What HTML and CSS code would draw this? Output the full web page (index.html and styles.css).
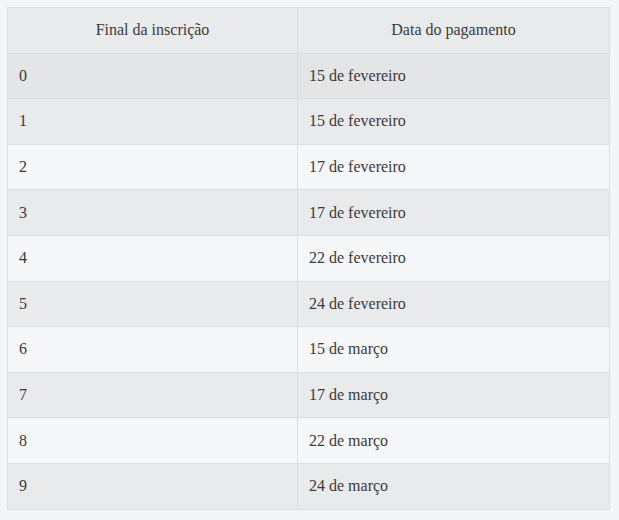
FILE: index.html
```html
<!DOCTYPE html>
<html lang="pt">
<head>
<meta charset="utf-8">
<link rel="stylesheet" href="styles.css">
</head>
<body>
<table class="pay-table">
  <thead>
    <tr><th>Final da inscrição</th><th>Data do pagamento</th></tr>
  </thead>
  <tbody>
    <tr class="hover"><td>0</td><td>15 de fevereiro</td></tr>
    <tr><td>1</td><td>15 de fevereiro</td></tr>
    <tr><td>2</td><td>17 de fevereiro</td></tr>
    <tr><td>3</td><td>17 de fevereiro</td></tr>
    <tr><td>4</td><td>22 de fevereiro</td></tr>
    <tr><td>5</td><td>24 de fevereiro</td></tr>
    <tr><td>6</td><td>15 de março</td></tr>
    <tr><td>7</td><td>17 de março</td></tr>
    <tr><td>8</td><td>22 de março</td></tr>
    <tr><td>9</td><td>24 de março</td></tr>
  </tbody>
</table>
</body>
</html>
```
FILE: styles.css
```css
html, body {
  margin: 0;
  background: #f4f5f7;
}
body {
  padding: 7px 10px 0 7px;
  font-family: "Liberation Serif", "DejaVu Serif", serif;
  font-size: 16px;
  color: #3a3a3a;
}
.pay-table {
  width: 603px;
  border-collapse: collapse;
  border: 1px solid #dcdddf;
}
.pay-table th,
.pay-table td {
  border: 1px solid #dcdddf;
  padding: 0 11px;
  height: 44.6px;
  text-align: left;
  font-weight: normal;
}
.pay-table th {
  text-align: center;
  background: #e9eaeb;
}
.pay-table th:first-child,
.pay-table td:first-child {
  width: 267px;
}
.pay-table tbody tr:nth-child(odd) td {
  background: #f6f7f9;
}
.pay-table tbody tr:nth-child(even) td {
  background: #e9eaec;
}
.pay-table tbody tr.hover td {
  background: #e4e5e6;
}
```
